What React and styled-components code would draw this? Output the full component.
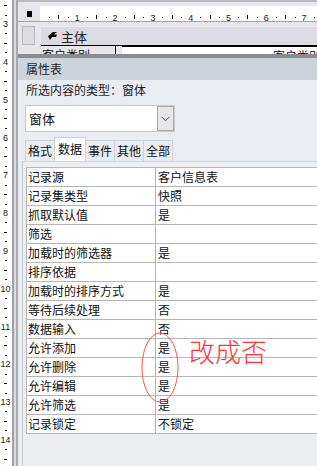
import React from 'react';
import styled, { createGlobalStyle } from 'styled-components';

const GlobalStyle = createGlobalStyle`
  html, body { margin: 0; padding: 0; overflow: hidden; background: #fff; }
  body { font-family: "Noto Sans CJK SC", "Noto Sans", sans-serif; }
`;

const CM = 37.8;

const Screen = styled.div`
  position: relative;
  width: 317px;
  height: 466px;
  display: grid;
  grid-template-columns: 12px 6px 1fr;
  overflow: hidden;
`;

const VRuler = styled.div`
  background: #fff;
  overflow: hidden;
`;

const Splitter = styled.div`
  background: linear-gradient(to right, #a2a2a6 0 2px, #dcdce0 2px 4px, #a8a8ac 4px 6px);
`;

const Main = styled.div`
  display: flex;
  flex-direction: column;
  min-width: 0;
  background: #e6e6eb;
`;

const TopEdge = styled.div`
  height: 2px;
  background: #b9b9be;
  margin-bottom: 4px;
`;

const RulerRow = styled.div`
  display: flex;
  height: 15px;
  border-bottom: 1px solid #a6a6aa;
`;

const Corner = styled.div`
  width: 22px;
  display: flex;
  align-items: center;
  padding-left: 9px;
  box-sizing: border-box;
`;

const BlackSquare = styled.div`
  width: 5px;
  height: 6px;
  background: #000;
`;

const HRuler = styled.div`
  flex: 1;
  background: #fff;
  overflow: hidden;
`;

const SectionRow = styled.div`
  display: flex;
  gap: 6px;
  margin-top: 4px;
  padding-left: 4px;
  height: 20px;
`;

const SelectorBox = styled.div`
  width: 13px;
  height: 19px;
  box-sizing: border-box;
  background: #dcdce2;
  border: 1px solid #b8b8be;
`;

const SectionBar = styled.div`
  flex: 1;
  display: flex;
  align-items: center;
  gap: 3px;
  padding-left: 6px;
  background: #dcdae3;
  border-top: 1px solid #eeeef2;
  border-bottom: 1px solid #000;
  box-sizing: border-box;
  font-size: 13px;
  color: #222;
`;

const ControlRow = styled.div`
  display: flex;
  height: 8px;
  padding-left: 23px;
  overflow: hidden;
`;

const ControlLabel = styled.div`
  width: 75px;
  border-right: 1px solid #000;
  font-size: 12px;
  line-height: 18px;
  color: #111;
  padding-left: 1px;
  box-sizing: border-box;
`;

const ControlBox = styled.div`
  flex: 1;
  margin-left: 6px;
  background: #fff;
  border-top: 1px solid #000;
  display: flex;
  justify-content: flex-end;
  font-size: 12px;
  line-height: 18px;
  color: #111;
  margin-right: -4px;
`;

const Sheet = styled.div`
  flex: 1;
  display: flex;
  flex-direction: column;
  border-top: 4px solid #8c8c90;
  background: #e9ecf0;
  min-height: 0;
`;

const SheetTitle = styled.div`
  height: 22px;
  line-height: 22px;
  padding-left: 8px;
  background: #cdd4dc;
  font-size: 12px;
  color: #1e1e1e;
`;

const TypeLine = styled.div`
  height: 18px;
  line-height: 18px;
  margin-top: 1px;
  padding-left: 8px;
  font-size: 12px;
  color: #1e1e1e;
`;

const Combo = styled.div`
  margin: 6px 0 0 7px;
  width: 150px;
  height: 27px;
  box-sizing: border-box;
  background: #fff;
  border: 1px solid #c6c9ce;
  display: flex;
  align-items: center;
  justify-content: space-between;
  font-size: 13px;
  color: #111;
  padding-left: 3px;
`;

const ComboButton = styled.div`
  width: 17px;
  height: 25px;
  box-sizing: border-box;
  background: #e6e6e8;
  border: 1px solid #ababae;
  display: flex;
  align-items: center;
  justify-content: center;
`;

const Tabs = styled.div`
  display: flex;
  align-items: flex-end;
  height: 24px;
  margin-top: 5px;
  padding-left: 7px;
`;

const Tab = styled.div`
  height: ${(p) => (p.$active ? 24 : 21)}px;
  line-height: ${(p) => (p.$active ? 22 : 20)}px;
  padding: 0 ${(p) => (p.$active ? 3 : 2)}px;
  margin-right: -1px;
  box-sizing: border-box;
  border: 1px solid #cfd3d8;
  border-bottom: none;
  background: ${(p) => (p.$active ? '#fff' : '#e9ecf0')};
  font-size: 12px;
  color: #111;
  position: relative;
  z-index: ${(p) => (p.$active ? 1 : 0)};
`;

const Pane = styled.div`
  flex: 1;
  margin-left: 4px;
  padding: 5px 0 0 3px;
  border-top: 1px solid #cfd3d8;
  border-left: 1px solid #c3c7cc;
  background: #eceef2;
`;

const Table = styled.div`
  display: grid;
  grid-template-columns: 129px 1fr;
  width: 320px;
  background: #fff;
  border-top: 1px solid #b6b6b6;
  border-left: 1px solid #b6b6b6;
`;

const Cell = styled.div`
  height: 18px;
  line-height: 18px;
  border-bottom: 1px solid #b6b6b6;
  border-right: ${(p) => (p.$label ? '1px solid #b6b6b6' : 'none')};
  padding-left: ${(p) => (p.$label ? 1 : 2)}px;
  font-size: 12px;
  color: #111;
  white-space: nowrap;
  overflow: hidden;
`;

const EllipseMark = styled.svg`
  position: absolute;
  left: 140px;
  top: 331px;
  pointer-events: none;
`;

const Note = styled.div`
  position: absolute;
  left: 189px;
  top: 334px;
  font-size: 26px;
  line-height: 34px;
  font-weight: 300;
  color: #ff3434;
  pointer-events: none;
`;

const rows = [
  ['记录源', '客户信息表'],
  ['记录集类型', '快照'],
  ['抓取默认值', '是'],
  ['筛选', ''],
  ['加载时的筛选器', '是'],
  ['排序依据', ''],
  ['加载时的排序方式', '是'],
  ['等待后续处理', '否'],
  ['数据输入', '否'],
  ['允许添加', '是'],
  ['允许删除', '是'],
  ['允许编辑', '是'],
  ['允许筛选', '是'],
  ['记录锁定', '不锁定'],
];

const tabs = ['格式', '数据', '事件', '其他', '全部'];

function VerticalRulerDrawing() {
  const items = [];
  for (let n = 2; n <= 14; n++) {
    for (let q = 0; q < 4; q++) {
      const y = -89.4 + (n + q / 4) * CM;
      if (y < 0) continue;
      if (q === 0) {
        items.push(
          <text key={`t${n}`} x="5.5" y={y + 3.2} fontSize="9" textAnchor="middle" fill="#1a1a1a" fontFamily="Liberation Sans, sans-serif">
            {n}
          </text>
        );
      } else if (q === 2) {
        items.push(<rect key={`h${n}`} x="4" y={Math.round(y)} width="3" height="1" fill="#111" />);
      } else {
        items.push(<rect key={`q${n}${q}`} x="5" y={Math.round(y)} width="2" height="1" fill="#111" />);
      }
    }
  }
  return (
    <svg width="12" height="466" viewBox="0 0 12 466">
      {items}
    </svg>
  );
}

function HorizontalRulerDrawing() {
  const items = [];
  for (let n = 0; n <= 7; n++) {
    for (let q = 0; q < 4; q++) {
      const x = -0.5 + (n + q / 4) * CM;
      if (q === 0) {
        if (n > 0)
          items.push(
            <text key={`t${n}`} x={x} y="10.5" fontSize="9" textAnchor="middle" fill="#1a1a1a" fontFamily="Liberation Sans, sans-serif">
              {n}
            </text>
          );
      } else if (q === 2) {
        items.push(<rect key={`h${n}`} x={Math.round(x)} y="5" width="1" height="4" fill="#111" />);
      } else {
        items.push(<rect key={`q${n}${q}`} x={Math.round(x)} y="7" width="1" height="1" fill="#111" />);
      }
    }
  }
  return (
    <svg width="277" height="15" viewBox="0 0 277 15">
      {items}
    </svg>
  );
}

function SectionIcon() {
  return (
    <svg width="11" height="10" viewBox="0 0 11 10">
      <path d="M1 5 L6 1 L10 1 L7 3.5 L10 3.5 L9 6 L5 6 L3 9 Z" fill="#000" />
    </svg>
  );
}

function Chevron() {
  return (
    <svg width="9" height="6" viewBox="0 0 9 6">
      <path d="M0.5 0.8 L4.5 4.8 L8.5 0.8" fill="none" stroke="#5a5a5e" strokeWidth="1" />
    </svg>
  );
}

export default function App() {
  return (
    <>
      <GlobalStyle />
      <Screen>
        <VRuler>
          <VerticalRulerDrawing />
        </VRuler>
        <Splitter />
        <Main>
          <TopEdge />
          <RulerRow>
            <Corner>
              <BlackSquare />
            </Corner>
            <HRuler>
              <HorizontalRulerDrawing />
            </HRuler>
          </RulerRow>
          <SectionRow>
            <SelectorBox />
            <SectionBar>
              <SectionIcon />
              <span>主体</span>
            </SectionBar>
          </SectionRow>
          <ControlRow>
            <ControlLabel>客户类别</ControlLabel>
            <ControlBox>客户类别</ControlBox>
          </ControlRow>
          <Sheet>
            <SheetTitle>属性表</SheetTitle>
            <TypeLine>所选内容的类型：窗体</TypeLine>
            <Combo>
              <span>窗体</span>
              <ComboButton>
                <Chevron />
              </ComboButton>
            </Combo>
            <Tabs>
              {tabs.map((t) => (
                <Tab key={t} $active={t === '数据'}>
                  {t}
                </Tab>
              ))}
            </Tabs>
            <Pane>
              <Table>
                {rows.map(([k, v]) => (
                  <React.Fragment key={k}>
                    <Cell $label>{k}</Cell>
                    <Cell>{v}</Cell>
                  </React.Fragment>
                ))}
              </Table>
            </Pane>
          </Sheet>
        </Main>
        <EllipseMark width="42" height="76" viewBox="0 0 42 76">
          <ellipse cx="20" cy="36.5" rx="18" ry="34.5" fill="none" stroke="#ff5050" strokeWidth="1" />
        </EllipseMark>
        <Note>改成否</Note>
      </Screen>
    </>
  );
}
